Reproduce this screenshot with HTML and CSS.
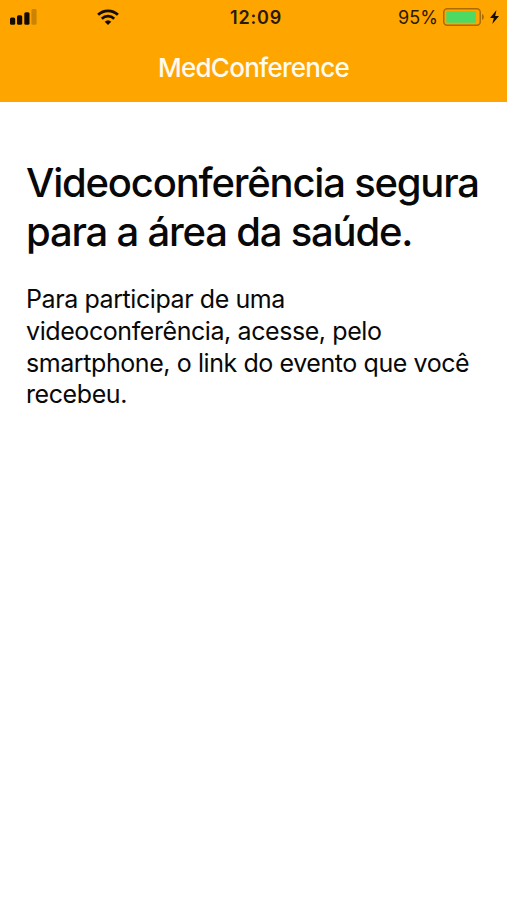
FILE: index.html
```html
<!DOCTYPE html>
<html lang="pt-BR">
<head>
    <meta charset="UTF-8">
    <meta name="viewport" content="width=device-width, initial-scale=1.0">
    <title>MedConference</title>
    <link rel="stylesheet" href="styles.css">
</head>
<body>
    <header class="header">
        <div class="status-bar">
            <div class="status-left">
                <svg class="signal" viewBox="0 0 27 16" width="27" height="16">
                    <rect x="0" y="8.5" width="5.2" height="7.3" rx="1.5"/>
                    <rect x="7" y="6.2" width="5.2" height="9.6" rx="1.5"/>
                    <rect x="14.3" y="3.2" width="5.2" height="12.6" rx="1.5"/>
                    <rect class="off" x="21.4" y="0" width="5.2" height="15.8" rx="1.5"/>
                </svg>
                <svg class="wifi" viewBox="0 0 22 16" width="22" height="16">
                    <path d="M1.1 5.8a14.3 14.3 0 0 1 19.8 0M4.8 9.7a9 9 0 0 1 12.4 0"/>
                    <path class="dot" d="M11 16l-3.3-3.3a4.8 4.8 0 0 1 6.6 0z"/>
                </svg>
            </div>
            <div class="clock">12:09</div>
            <div class="status-right">
                <span class="percent">95%</span>
                <svg class="battery" viewBox="0 0 42 18" width="42" height="18">
                    <rect class="shell" x="0.75" y="0.75" width="36.5" height="16.5" rx="3.5"/>
                    <rect class="level" x="3.3" y="3.3" width="29.5" height="11.4" rx="0.5"/>
                    <path class="cap" d="M39 6v6c2.5-1 2.5-5 0-6z"/>
                </svg>
                <svg class="bolt" viewBox="0 0 9 14" width="9" height="14">
                    <path d="M6.5 0L0 8h3.8L2.3 14 9 6H5.2z"/>
                </svg>
            </div>
        </div>
        <div class="title">MedConference</div>
    </header>

    <main class="content">
        <h1>Videoconferência segura<br>para a área da saúde.</h1>
        <p>Para participar de uma<br>videoconferência, acesse, pelo<br>smartphone, o link do evento que você<br>recebeu.</p>
    </main>
</body>
</html>
```
FILE: styles.css
```css
* {
    box-sizing: border-box;
}

body {
    margin: 0;
    min-height: 100vh;
    background-color: #fff;
    color: #080808;
    font-family: Inter, 'Liberation Sans', sans-serif;
}

.header {
    height: 102px;
    background-color: #ffa500;
}

.status-bar {
    display: grid;
    grid-template-columns: 1fr auto 1fr;
    align-items: center;
    height: 34px;
    padding: 0 8px 0 10px;
    color: #2b1a00;
}

.status-left,
.status-right {
    display: flex;
    align-items: center;
}

.status-left {
    gap: 60px;
}

.status-right {
    justify-content: flex-end;
}

.signal,
.wifi,
.bolt {
    fill: #140c00;
}

.signal .off {
    fill: #cc8400;
}

.wifi path {
    fill: none;
    stroke: #140c00;
    stroke-width: 2.8;
}

.wifi .dot {
    fill: #140c00;
    stroke: none;
}

.clock {
    padding-left: 3px;
    font-size: 18px;
    font-weight: 600;
    letter-spacing: 0.8px;
}

.percent {
    margin-right: 5px;
    font-size: 18px;
    letter-spacing: 0.1px;
}

.battery .shell {
    fill: none;
    stroke: #a86c00;
    stroke-width: 1.5;
}

.battery .level {
    fill: #4cd964;
}

.battery .cap {
    fill: #a86c00;
}

.bolt {
    margin-left: 5px;
}

.title {
    padding-top: 18px;
    color: #fffbef;
    font-size: 26px;
    font-weight: 500;
    line-height: 32px;
    letter-spacing: -0.75px;
    text-align: center;
}

.content {
    padding: 56px 26px 0;
    white-space: nowrap;
}

h1 {
    margin: 0;
    font-size: 40px;
    font-weight: 500;
    line-height: 49px;
    letter-spacing: -1.2px;
}

p {
    margin: 28px 0 0;
    font-size: 25px;
    line-height: 31.8px;
    letter-spacing: -0.42px;
}
```
